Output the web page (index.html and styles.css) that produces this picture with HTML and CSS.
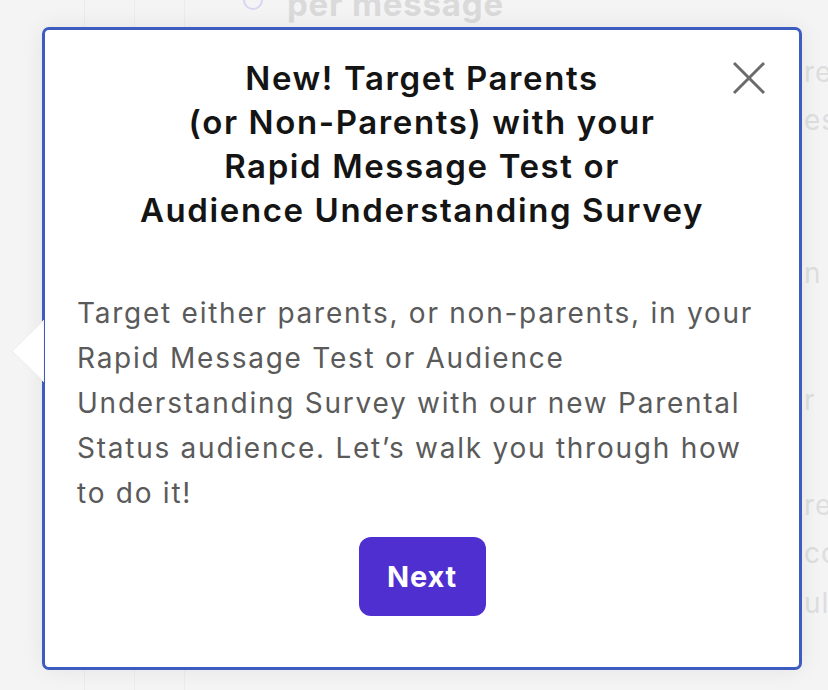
FILE: index.html
```html
<!DOCTYPE html>
<html lang="en">
<head>
<meta charset="utf-8">
<title>New! Target Parents</title>
<link rel="stylesheet" href="styles.css">
</head>
<body>
<div class="page">
  <div class="backdrop">
    <div class="top-strip">
      <div class="col"></div>
      <div class="col"></div>
      <div class="col"></div>
      <div class="dot"></div>
      <div class="bg-title">per message</div>
    </div>
    <div class="right-col">
      <span class="frag f1">rea</span>
      <span class="frag f2">es</span>
      <span class="frag f3">n E</span>
      <span class="frag f4">r</span>
      <span class="frag f5">rea</span>
      <span class="frag f6">co</span>
      <span class="frag f7">ul</span>
    </div>
    <div class="bottom-strip">
      <div class="col"></div>
      <div class="col"></div>
      <div class="col"></div>
    </div>
  </div>

  <div class="popover" role="dialog">
    <svg class="pointer" width="34" height="66" viewBox="0 0 34 66">
      <polygon points="34,2 2,33 34,64" fill="#ffffff" stroke="#ececec" stroke-width="1"/>
    </svg>
    <button class="close" aria-label="Close">
      <svg width="34" height="34" viewBox="0 0 34 34">
        <path d="M2 2 L32 32 M32 2 L2 32" stroke="#6b6b6b" stroke-width="3" fill="none"/>
      </svg>
    </button>
    <h2 class="title">New! Target Parents<br>(or Non-Parents) with your<br>Rapid Message Test or<br>Audience Understanding Survey</h2>
    <p class="text">Target either parents, or non-parents, in your<br>Rapid Message Test or Audience<br>Understanding Survey with our new Parental<br>Status audience. Let’s walk you through how<br>to do it!</p>
    <div class="actions">
      <button class="next">Next</button>
    </div>
  </div>
</div>
</body>
</html>
```
FILE: styles.css
```css
* { box-sizing: border-box; }
html, body { margin: 0; padding: 0; }
body {
  width: 828px;
  height: 690px;
  overflow: hidden;
  background: #f4f4f5;
  font-family: Inter, "Noto Sans", sans-serif;
}
.page {
  position: relative;
  width: 828px;
  height: 690px;
}
.backdrop {
  display: flex;
  flex-direction: column;
  height: 690px;
}
.top-strip {
  display: flex;
  align-items: flex-start;
  height: 27px;
  padding-left: 35px;
}
.col {
  width: 50px;
  height: 100%;
  border-right: 1px solid #ececec;
}
.dot {
  width: 20px;
  height: 20px;
  border-radius: 50%;
  border: 2px solid #d9d4f2;
  margin: -10px 0 0 58px;
}
.bg-title {
  margin: -15px 0 0 24px;
  font-size: 33px;
  font-weight: 700;
  color: #dadada;
  line-height: 38px;
  letter-spacing: 0.8px;
  white-space: nowrap;
}
.right-col {
  flex: 1;
  display: flex;
  flex-direction: column;
  padding-left: 804px;
  white-space: nowrap;
}
.frag {
  font-size: 28px;
  color: #dedede;
  line-height: 34px;
  letter-spacing: 1px;
}
.f1 { margin-top: 28px; }
.f2 { margin-top: 14px; }
.f3 { margin-top: 119px; }
.f4 { margin-top: 93px; }
.f5 { margin-top: 71px; }
.f6 { margin-top: 14px; }
.f7 { margin-top: 16px; }
.bottom-strip {
  display: flex;
  height: 20px;
  padding-left: 35px;
}
.popover {
  position: absolute;
  left: 42px;
  top: 27px;
  width: 760px;
  height: 643px;
  background: #ffffff;
  border: 3px solid #3e5bbf;
  border-radius: 7px;
  box-shadow: 0 0 22px rgba(0, 0, 0, 0.07);
  padding: 26px 32px 0 32px;
}
.pointer {
  position: absolute;
  left: -35px;
  top: 288px;
}
.close {
  position: absolute;
  top: 31px;
  right: 33px;
  width: 34px;
  height: 34px;
  padding: 0;
  border: 0;
  background: none;
}
.close svg { display: block; }
.title {
  margin: 0;
  text-align: center;
  font-size: 33px;
  font-weight: 600;
  line-height: 44px;
  color: #141414;
  letter-spacing: 1.6px;
  white-space: nowrap;
}
.text {
  margin: 59px 0 0 0;
  font-size: 28px;
  line-height: 45px;
  color: #5a5a5a;
  letter-spacing: 1.75px;
  white-space: nowrap;
}
.actions {
  display: flex;
  justify-content: center;
  margin-top: 21px;
}
.next {
  width: 127px;
  height: 79px;
  border: 0;
  border-radius: 12px;
  background: #4f2fd0;
  color: #ffffff;
  font-family: Inter, "Noto Sans", sans-serif;
  font-size: 29px;
  font-weight: 700;
  letter-spacing: 0.8px;
}
```
